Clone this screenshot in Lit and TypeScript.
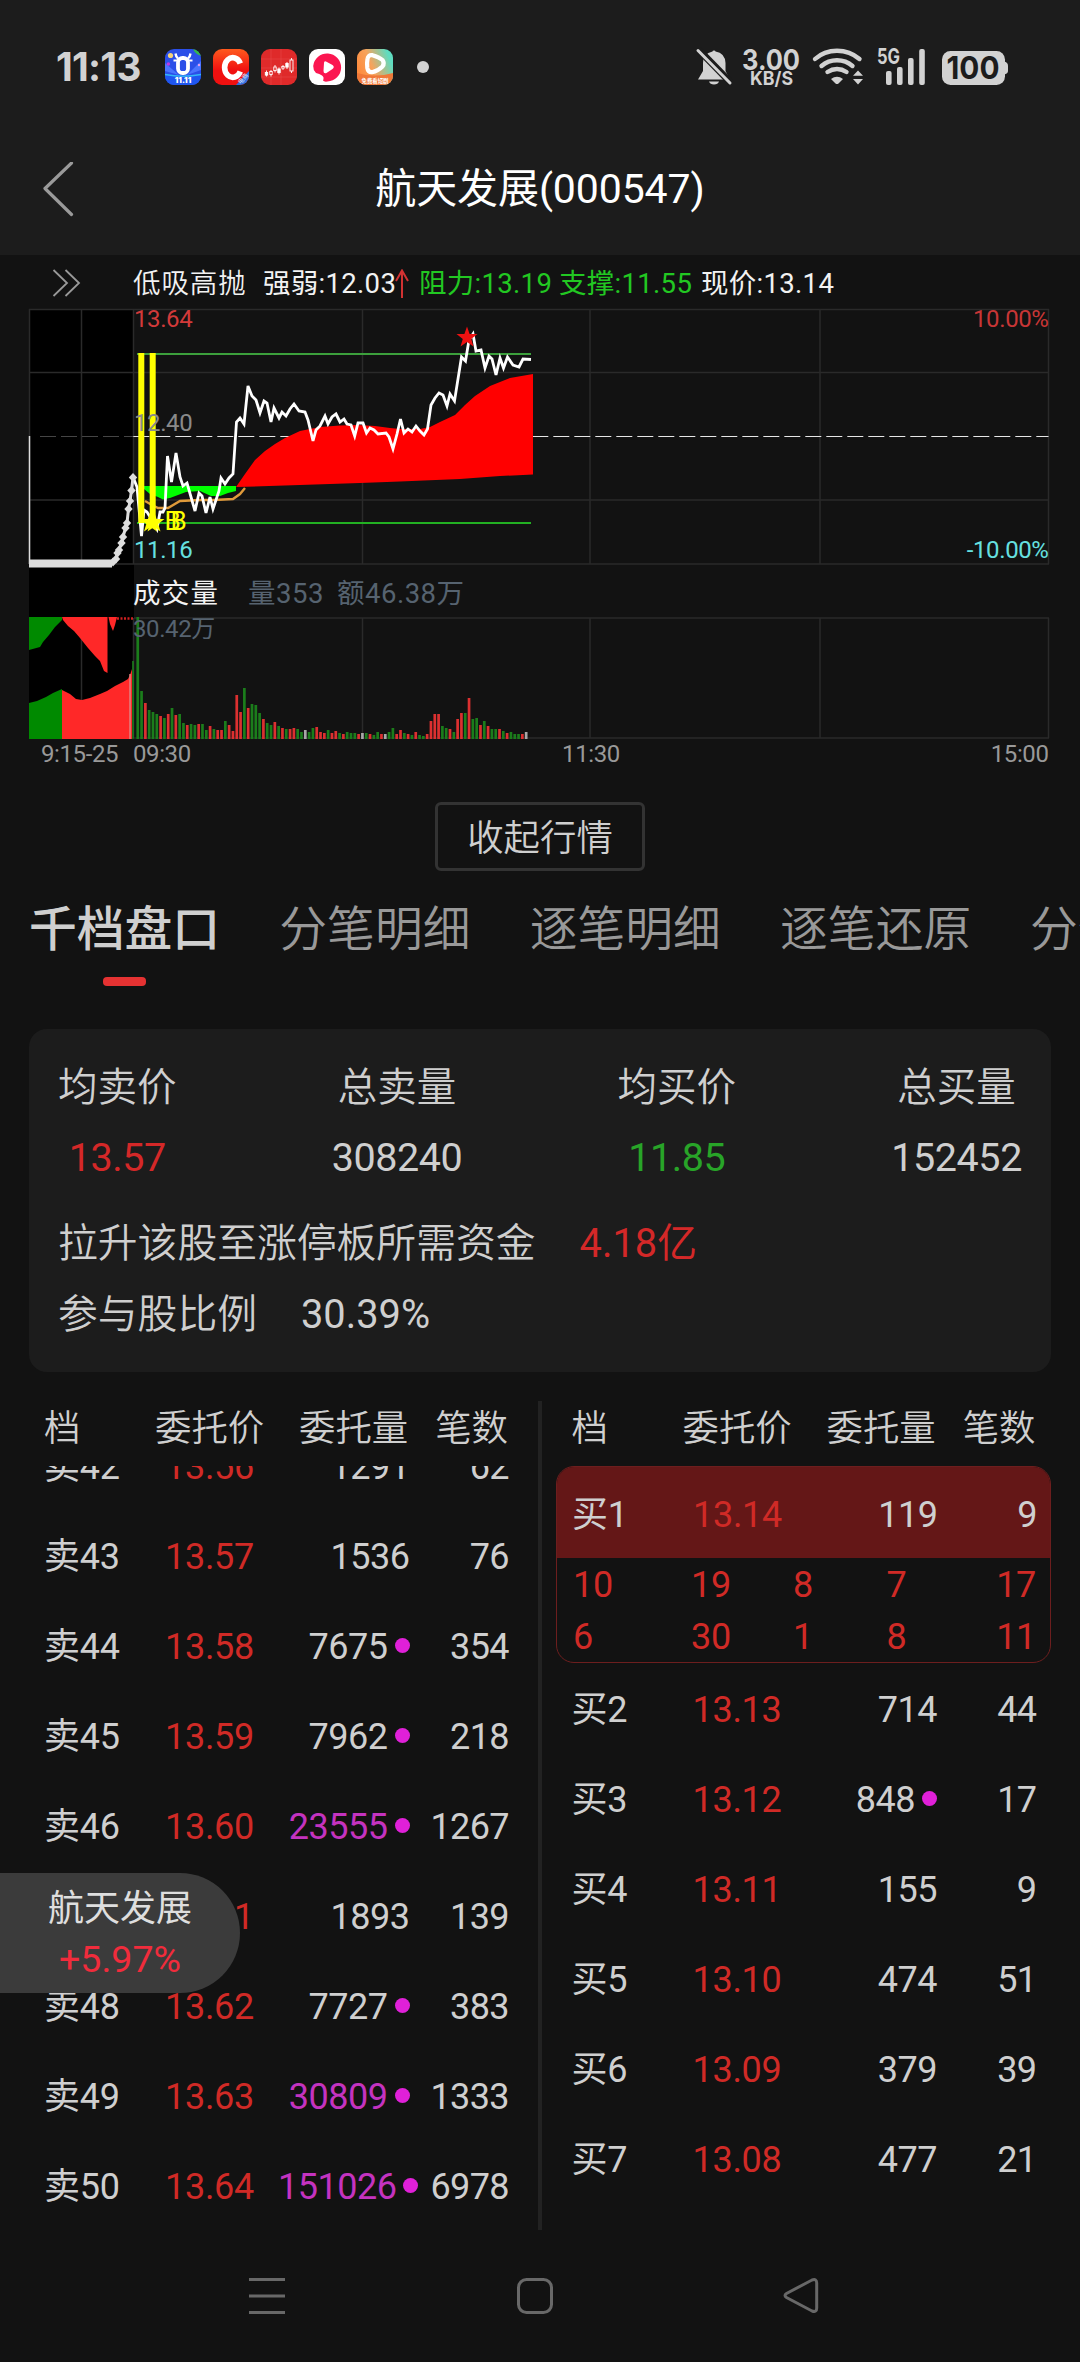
import { LitElement, html, css, svg, nothing } from "lit";
import { customElement, property } from "lit/decorators.js";
import { classMap } from "lit/directives/class-map.js";

const FONT = css`"Roboto", "Noto Sans CJK SC", "Liberation Sans", sans-serif`;

/* ---------- status bar ---------- */

@customElement("status-bar")
export class StatusBar extends LitElement {
  static styles = css`
    :host { display: block; }
    .bar { display: flex; align-items: center; height: 134px; padding: 0 72px 0 56px; color: #d2d2d2; font-family: "Inter", "Roboto", sans-serif; }
    .time { width: 109px; font: 700 39px/40px "Inter", sans-serif; letter-spacing: -0.8px; white-space: nowrap; }
    .apps { display: flex; gap: 12px; align-items: center; }
    .apps svg { display: block; }
    .dot { width: 12px; height: 12px; border-radius: 50%; background: #d2d2d2; margin-left: 24px; }
    .right { display: block; margin-left: auto; }
  `;
  render() {
    return html`<div class="bar">
      <span class="time">11:13</span>
      <div class="apps">
        <svg width="36" height="36" viewBox="0 0 36 36">
          <defs>
            <clipPath id="r"><rect width="36" height="36" rx="9"></rect></clipPath>
          </defs>
          <g clip-path="url(#r)">
            <rect width="36" height="36" fill="#2b4fe8"></rect>
            <path d="M0 14L14 26L0 22zM36 12L22 26L36 21z" fill="#4a74ff"></path>
            <path d="M0 25Q18 29 36 25V36H0z" fill="#1f56f0"></path>
            <path d="M0 25.5Q18 29 36 25.5" stroke="#35b6f5" stroke-width="1.6" fill="none"></path>
            <circle cx="5.5" cy="6.5" r="2.6" fill="#f3d27a"></circle>
            <circle cx="3.4" cy="15" r="1.8" fill="#c03ae0"></circle>
            <path d="M28 0H36V7Q30 5 28 0z" fill="#35b848"></path>
            <circle cx="34" cy="16" r="1.2" fill="#e4a0f0"></circle>
            <path d="M10.5 4.5Q11 8 13 9.500M25.500 4.500Q25 8 23 9.500" stroke="#fff" stroke-width="2.400" fill="none"></path>
            <path d="M8.500 11.500H27.500" stroke="#fff" stroke-width="2.200"></path>
            <rect x="13" y="9" width="10" height="15" rx="4.500" stroke="#fff" stroke-width="3.800" fill="#2b4fe8"></rect>
            <text x="18" y="34.300" font-size="8" font-weight="900" fill="#fff" text-anchor="middle" font-family="Inter">11.11</text>
          </g>
        </svg>
        <svg width="36" height="36" viewBox="0 0 36 36">
          <defs>
            <linearGradient id="c" x2="0" y2="1"><stop stop-color="#ff5a1e"></stop><stop offset=".6" stop-color="#f01010"></stop></linearGradient>
            <clipPath id="r2"><rect width="36" height="36" rx="9"></rect></clipPath>
          </defs>
          <g clip-path="url(#r2)">
            <rect width="36" height="36" fill="url(#c)"></rect>
            <path d="M27.300 14.500A8.200 9.800 0 1 0 27.300 22.500" fill="none" stroke="#fff" stroke-width="5.600"></path>
            <path d="M36 22V36H23z" fill="#2f6fe0"></path>
            <text x="0" y="0" transform="translate(27.500 35.500) rotate(-47)" font-size="6" fill="#dfe9ff" font-family="Noto Sans CJK SC">电商</text>
          </g>
        </svg>
        <svg width="36" height="36" viewBox="0 0 36 36">
          <rect width="36" height="36" rx="9" fill="#df2a2a"></rect>
          <path d="M0 10H36M0 19H36M0 28H36M10 0V36M20 0V36" stroke="#e84848" stroke-width=".6"></path>
          <g stroke="#fff" stroke-width=".9" fill="none">
            <path d="M5.500 21.500V27.500M10 21V27.500M14 16V23.500M18 18.500V25.500M22 16V21M26 13V20M30.500 9V24"></path>
            <rect x="4.300" y="23.500" width="2.400" height="2.600" fill="#fff"></rect>
            <rect x="8.800" y="22.500" width="2.400" height="3" fill="#df2a2a"></rect>
            <rect x="12.800" y="18" width="2.400" height="3.600" fill="#df2a2a"></rect>
            <rect x="16.800" y="20" width="2.400" height="3.600" fill="#fff"></rect>
            <rect x="20.800" y="17.500" width="2.400" height="1.600" fill="#df2a2a"></rect>
            <rect x="24.800" y="14.500" width="2.400" height="3.600" fill="#fff"></rect>
            <rect x="29" y="11" width="3" height="11" fill="#df2a2a"></rect>
          </g>
        </svg>
        <svg width="36" height="36" viewBox="0 0 36 36">
          <rect width="36" height="36" rx="9" fill="#fff"></rect>
          <path d="M14 31.500Q15.500 28 13 26.500Q10.500 24.500 7 24Q4 21 4.200 17A14 14 0 1 1 18.500 32.500Q15 33 14 31.500z" fill="#fb1650"></path>
          <path d="M15 14Q15 11.500 17.500 12.700L23.500 16Q26 18 23.500 20L17.500 24Q14.500 25 14.500 22z" fill="#fff"></path>
        </svg>
        <svg width="36" height="36" viewBox="0 0 36 36">
          <defs>
            <linearGradient id="g" x1="0" y1=".6" x2="1" y2=".2"><stop stop-color="#ff8a3c"></stop><stop offset=".4" stop-color="#f6a35c"></stop><stop offset=".9" stop-color="#5fdcc0"></stop></linearGradient>
            <clipPath id="r3"><rect width="36" height="36" rx="9"></rect></clipPath>
          </defs>
          <g clip-path="url(#r3)">
            <rect width="36" height="36" fill="url(#g)"></rect>
            <path d="M0 24Q18 29 36 24V36H0z" fill="#f07838"></path>
            <path d="M10.500 10Q11 5.500 15.500 6.200Q22 8 25.500 11Q28 14.500 25.500 17.500Q21 22 15 23.200Q11 23.500 10.300 19Q9.700 14 10.500 10z" fill="none" stroke="#fff" stroke-width="4.200"></path>
            <text x="18" y="34" font-size="5.400" font-weight="700" fill="#fff" text-anchor="middle" font-family="Noto Sans CJK SC">免费看短剧</text>
          </g>
        </svg>
      </div>
      <div class="dot"></div>
      <svg class="right" width="314" height="40" viewBox="694 47 314 40" fill="#d2d2d2">
        <path d="M712.500 51.500Q712.500 50.500 714 50.500Q715.500 50.500 715.500 51.500Q725 53 725.500 63V71L730 79.500H698L703 71V63Q703 53.500 712.500 51.500z"></path>
        <path d="M709 81.500H719Q718 84.500 714 84.500Q710 84.500 709 81.500z"></path>
        <path d="M696 47L733 85" stroke="#1c1c1c" stroke-width="7"></path>
        <path d="M698 50.500L730 83" stroke="#d2d2d2" stroke-width="3" stroke-linecap="round"></path>
        <g font-family="Inter" font-weight="700">
          <text x="742" y="69.500" font-size="28" textLength="58" lengthAdjust="spacingAndGlyphs">3.00</text>
          <text x="750" y="84.500" font-size="18.500" textLength="43" lengthAdjust="spacingAndGlyphs">KB/S</text>
          <text x="877" y="64" font-size="21.500" textLength="23" lengthAdjust="spacingAndGlyphs">5G</text>
        </g>
        <g fill="none" stroke="#d2d2d2" stroke-width="4.400" stroke-linecap="round">
          <path d="M815 59Q824 50.700 837 50.700Q850 50.700 859.500 59"></path>
          <path d="M821.500 66Q828 60.200 837 60.200Q846 60.200 852.500 66"></path>
          <path d="M827.500 72Q832 69 837 69Q842 69 846.500 72"></path>
        </g>
        <path d="M831 79Q837 74.500 843 79L838.500 83.500Q837 84.700 835.500 83.500z"></path>
        <path d="M858 70.500L863 75.800H853zM858 84.500L863 79H853z"></path>
        <rect x="886" y="71" width="5.600" height="14" rx="2"></rect>
        <rect x="897" y="67" width="5.600" height="18" rx="2"></rect>
        <rect x="908" y="58" width="5.600" height="27" rx="2"></rect>
        <rect x="919.200" y="49" width="5.600" height="36" rx="2"></rect>
        <rect x="942" y="51" width="63" height="34" rx="8.500"></rect>
        <path d="M1004 61.500Q1008 62 1008 66V71Q1008 73.500 1004 74.500z"></path>
        <text x="946.500" y="79.300" font-size="31.500" font-weight="700" font-family="Inter" fill="#1c1c1c" textLength="53" lengthAdjust="spacingAndGlyphs">100</text>
      </svg>
    </div>`;
  }
}

/* ---------- intraday chart ---------- */

const PRICE =
  "133,477 137,487 141.5,536 144,510 147,512 152,520 157,529 160,512 163,512 165,508 167.5,456 171.5,482 176,453 180,477 183,486 187,483 191,497 195,511 199,493 202,496 206,513 210,497 213,509 219,491 221,478 225,484 229,478 233,474 236.5,422 240,418 244,424 248,386 252,396 256,400 260,413 264,401 267,403 271,422 274,408 279,418 282,412 286,416 290,409 294,404 299,411 305,412 308,420 313,441 316,430 320,426 325,416 328,424 332,417 336,414 340,422 344,419 347,424 351,425 354.7,436 358,423 363,423 366.5,433 370,428 374,430 378,434 386,433 389,437 393,449 397,434 400.5,419 404,433 408,429 412,432 416,426 420,431 424,435 427.5,429 431,405 435,398 439,393 443,395 447,406 450,394 454.5,401 461.5,357 465.5,361 469,340 473,334 476,351 481,350 485,368 489,356 492,359 496,375 500,358 503.5,368 507.5,357 513,365 519,367 523,359 531,359.5";

const RISE =
  "236,487 245,474 255,460 265,451 275,444 285,438 300,431 310,429 320,427 340,425.5 357,425 375,426 390,428 400,429 420,429 430,427 440,422 455,415 465,405 475,396 490,386 510,378 533,374 533,474.5 500,476 460,479 400,481.5 360,483 300,485";

const FALL =
  "144,486 236,486 236,491 228,493 220,496 211,496 200,491 186,492 178,495 170,498 163,499.5 158,497 150,494 144,489";

const AUCTION: [number, number][] = [
  [133, 477.5], [131.5, 490.5], [130, 501], [128.5, 509], [127, 523], [125.5, 528],
  [123, 537], [121.5, 543], [119, 550], [117.5, 553], [116, 559], [113, 562],
];

/* One entry per minute: colour letter and bar height. */
const VOLUME = (
  "g122 g48 r36 g29 g27 g25 r23 g21 r25 g31 r24 g25 g16 r14 g15 g14 r15 g15 g9 r13 g10 r9 r9 g18 r14 r8 r44 r27 g51 r31 g35 g34 g26 r20 g16 g14 r17 g13 r11 g10 r10 r11 g10 g7 w9 g7 g11 r12 r7 r6 g9 r6 r8 g6 r5 g7 g6 g6 r5 w6 g6 r5 g4 g7 r5 w5 g7 g11 r5 r9 g6 r5 g4 r7 g4 g3 r5 r18 r25 r25 g13 g11 r10 g7 r20 r26 g26 r41 g20 g21 r14 g18 r13 g10 g10 r10 g8 r6 g7 g5 g5 r5 w7"
).split(" ").map((s) => ({ tone: s[0], h: Number(s.slice(1)) }));

const TONE: Record<string, string> = { g: "#1b7d1b", r: "#dc3030", w: "#a8a8a8" };

function star(cx: number, cy: number, r: number) {
  return Array.from({ length: 10 }, (_, i) => {
    const a = (Math.PI / 5) * i - Math.PI / 2;
    const k = i % 2 ? r * 0.4 : r;
    return `${(cx + k * Math.cos(a)).toFixed(1)},${(cy + k * Math.sin(a)).toFixed(1)}`;
  }).join(" ");
}

@customElement("intraday-chart")
export class IntradayChart extends LitElement {
  static styles = css`
    :host { display: block; font-family: ${FONT}; }
    .legend { display: grid; grid-template-columns: 133px 130px 132px 24px 140px 142px auto; align-items: center; padding-top: 3px; height: 50px; font-size: 27.500px; line-height: 52px; color: #f2f2f2; white-space: nowrap; }
    .legend span { letter-spacing: 0.300px; }
    .legend .cjk { letter-spacing: 0.900px; font-weight: 350; }
    .legend .lv { color: #22c822; }
    .more { justify-self: start; margin-left: 52px; display: block; }
    .plot { display: block; }
    .t { font-size: 24px; letter-spacing: -0.400px; }
    .vol { font-size: 27.500px; letter-spacing: 0.500px; }
    .vol .name { letter-spacing: 1.200px; }
  `;
  render() {
    const grid = "#2a2a2a";
    return html`
      <div class="legend">
        <svg class="more" width="30" height="30" viewBox="0 1 30 30" fill="none" stroke="#999" stroke-width="1.800">
          <path d="M1.500 2L15 15L1.500 28M13.500 2L27 15L13.500 28"></path>
        </svg>
        <span class="cjk">低吸高抛</span>
        <span>强弱:12.03</span>
        <svg width="14" height="30" viewBox="0 0 14 30" fill="none" stroke="#d23232" stroke-width="2">
          <path d="M7 29V1.500M1 12L7 1.500L13 12"></path>
        </svg>
        <span class="lv">阻力:13.19</span>
        <span class="lv">支撑:11.55</span>
        <span>现价:13.14</span>
      </div>
      <svg class="plot" width="1080" height="462" viewBox="0 308 1080 462">
        <rect x="29" y="309" width="105" height="430" fill="#000"></rect>
        <g stroke=${grid} stroke-width="1.500" fill="none">
          <path d="M29 309.500H1049M29 372.500H1049M29 500H1049M29 564H1049M134 618H1049M134 738H1049" stroke-width="1.600"></path>
          <path d="M29.500 309V564M81.500 309V564M133.500 309V564M362.500 309V564M590 309V564M820 309V564M1048.500 309V564"></path>
          <path d="M81.500 618V738M133.500 618V738M362.500 618V738M590 618V738M820 618V738M1048.500 618V738"></path>
        </g>
        <path d="M40 436.500H133" stroke="#454545" stroke-width="1" stroke-dasharray="16 5"></path>
        <path d="M133.300 436.500H1048.500" stroke="#e6e6e6" stroke-width="1" stroke-dasharray="16 5"></path>

        <path d="M137 354H531" stroke="#3ca03c" stroke-width="2"></path>
        <path d="M137 523H531" stroke="#22b022" stroke-width="2"></path>
        <polygon points=${FALL} fill="#00ff00"></polygon>
        <polygon points=${RISE} fill="#ff0000"></polygon>
        <polyline points="145,501 152,505 158,508 168,508 180,501 200,500 214,500 233,499 240,494 245,488" fill="none" stroke="#e09a3a" stroke-width="2.400"></polyline>
        <polyline points=${PRICE} fill="none" stroke="#fff" stroke-width="2.800"></polyline>
        <rect x="138.300" y="353" width="6" height="170" fill="#ffff00"></rect>
        <rect x="149.700" y="353" width="6" height="170" fill="#ffff00"></rect>
        <polygon points=${star(150.5, 522.5, 11)} fill="#ffff00"></polygon>
        <polygon points=${star(154, 522.5, 11)} fill="#ffff00"></polygon>
        <polygon points=${star(467, 337.5, 11)} fill="#ee1111"></polygon>
        <g fill="#ffff00" font-size="26"><text x="164.500" y="529.500">B</text><text x="170.500" y="529.500">B</text></g>

        <path d="M29.500 436V564" stroke="#ddd" stroke-width="1.500"></path>
        <path d="M29 563.500H112" stroke="#ddd" stroke-width="8"></path>
        <polyline points=${AUCTION.map((p) => p.join(",")).join(" ")} fill="none" stroke="#ddd" stroke-width="3"></polyline>
        ${AUCTION.map(([x, y]) => svg`<polygon points="${x - 4.2},${y} ${x},${y - 4.6} ${x + 4.2},${y} ${x},${y + 4.6}" fill="#ddd"></polygon>`)}

        <g class="t">
          <text x="134" y="327" fill="#d23a3a">13.64</text>
          <text x="134" y="431" fill="#8a8a8a">12.40</text>
          <text x="134" y="558" fill="#66e0e0">11.16</text>
          <text x="1048.500" y="327" fill="#c83636" text-anchor="end">10.00%</text>
          <text x="1048.500" y="558" fill="#66e0e0" text-anchor="end">-10.00%</text>
          <g fill="#999">
            <text x="41" y="762">9:15-25</text>
            <text x="133" y="762">09:30</text>
            <text x="591" y="762" text-anchor="middle">11:30</text>
            <text x="1048.500" y="762" text-anchor="end">15:00</text>
          </g>
        </g>
        <g class="vol">
          <text class="name" x="133" y="602.500" fill="#f2f2f2">成交量</text>
          <text x="248" y="602.500" fill="#566370">量353</text>
          <text x="337" y="602.500" fill="#566370">额46.38万</text>
        </g>

        <polygon points="29,617 62,617 62,620 55,627 49,635 43,642 40,647 29,650" fill="#008a00"></polygon>
        <polygon points="62,617 107.500,617 107.500,673 104,671 100,661 95,656 88,648 80,638 74,631 68,626 63,620" fill="#ff2828"></polygon>
        <polygon points="108.500,617 117,617 115,625 113,631 110,624" fill="#ff2828"></polygon>
        <path d="M117 618.500H133" stroke="#d02020" stroke-width="2.500" stroke-dasharray="2 1.500"></path>
        <polygon points="29,703 37,701 46,697 53,693 62,689 62,739 29,739" fill="#008a00"></polygon>
        <polygon points="62,690 70,694 76,699 82,700 90,698 100,694 107,691 115,686 123,682 128,679 130,675 132,669 132,739 62,739" fill="#ff2828"></polygon>
        <path d="M130 674V739" stroke="#e08080" stroke-width="1.500"></path>
        <path d="M133 661V739" stroke="#1b7d1b" stroke-width="1.600"></path>
        ${VOLUME.map(({ tone, h }, i) => svg`<rect x=${136.4 + i * 3.808} y=${739 - h} width="2.700" height=${h} fill=${TONE[tone]}></rect>`)}
        <text class="t" x="133" y="636.500" fill="#566370">30.42万</text>
      </svg>
    `;
  }
}

/* ---------- order book ---------- */

interface Level { name: string; price: string; vol: string; count: string; dot?: boolean; big?: boolean; }

const SELLS: Level[] = [
  { name: "卖42", price: "13.56", vol: "1291", count: "62" },
  { name: "卖43", price: "13.57", vol: "1536", count: "76" },
  { name: "卖44", price: "13.58", vol: "7675", count: "354", dot: true },
  { name: "卖45", price: "13.59", vol: "7962", count: "218", dot: true },
  { name: "卖46", price: "13.60", vol: "23555", count: "1267", dot: true, big: true },
  { name: "卖47", price: "13.61", vol: "1893", count: "139" },
  { name: "卖48", price: "13.62", vol: "7727", count: "383", dot: true },
  { name: "卖49", price: "13.63", vol: "30809", count: "1333", dot: true, big: true },
  { name: "卖50", price: "13.64", vol: "151026", count: "6978", dot: true, big: true },
];

const BUYS: Level[] = [
  { name: "买2", price: "13.13", vol: "714", count: "44" },
  { name: "买3", price: "13.12", vol: "848", count: "17", dot: true },
  { name: "买4", price: "13.11", vol: "155", count: "9" },
  { name: "买5", price: "13.10", vol: "474", count: "51" },
  { name: "买6", price: "13.09", vol: "379", count: "39" },
  { name: "买7", price: "13.08", vol: "477", count: "21" },
];

const QUEUE = [["10", "19", "8", "7", "17"], ["6", "30", "1", "8", "11"]];

@customElement("level-row")
export class LevelRow extends LitElement {
  @property({ attribute: false }) level!: Level;
  static styles = css`
    :host { display: block; }
    .row { display: grid; grid-template-columns: 111px 108px 147px 99px; line-height: 90px; height: 90px; white-space: nowrap; letter-spacing: -0.300px; }
    .price { text-align: center; color: #d02a26; margin-left: 1px; }
    .vol { display: flex; align-items: center; padding-left: 15px; margin-right: 0.500px; }
    .num { margin-left: auto; letter-spacing: -0.500px; }
    .big { color: #c433c0; }
    .count { text-align: right; letter-spacing: -0.600px; }
    .dot { flex: none; width: 15px; height: 15px; border-radius: 50%; background: #e020d8; margin: -3px 0 0 7px; }
  `;
  render() {
    const l = this.level;
    return html`<div class="row">
      <span>${l.name}</span>
      <span class="price">${l.price}</span>
      <span class="vol"><span class=${classMap({ num: true, big: !!l.big })}>${l.vol}</span>${l.dot ? html`<span class="dot"></span>` : nothing}</span>
      <span class="count">${l.count}</span>
    </div>`;
  }
}

@customElement("order-book")
export class OrderBook extends LitElement {
  static styles = css`
    :host { display: block; font-family: ${FONT}; font-size: 36px; color: #cfcfcf; }
    .book { display: grid; grid-template-columns: 538px 4px 538px; height: 829px; overflow: hidden; }
    .rule { background: #222; }
    .side { display: flex; flex-direction: column; min-width: 0; min-height: 0; }
    .head { display: grid; grid-template-columns: 111px 144px 108px 101px; line-height: 56px; height: 65px; font-size: 36.400px; font-weight: 350; white-space: nowrap; flex: none; }
    .sell .head, .sell .rows { padding-left: 44px; }
    .buy .head { padding-left: 29.500px; }
    .head span:nth-child(n + 3) { text-align: right; }
    .clip { overflow: hidden; flex: 1; }
    .sell .rows { margin-top: -44px; }
    .buy .rows { padding-left: 29.500px; margin-top: 2px; }
    .pick { margin-left: 14px; width: 493px; height: 195px; border: 1px solid #6d1e1e; border-radius: 18px; overflow: hidden; }
    .pick .top { background: #641717; padding: 3px 0 0 15px; height: 88px; }
    .queue { display: grid; grid-template-columns: 118px 65px 94px 93px 93px; padding: 1px 0 0 16px; line-height: 52px; color: #d02a26; letter-spacing: -0.300px; }
    .queue span:nth-child(5n + 3), .queue span:nth-child(5n + 4) { text-align: center; }
    .queue span:nth-child(5n) { text-align: right; }
  `;
  private head() {
    return html`<div class="head"><span>档</span><span>委托价</span><span>委托量</span><span>笔数</span></div>`;
  }
  render() {
    return html`<div class="book">
      <div class="side sell">
        ${this.head()}
        <div class="clip"><div class="rows">${SELLS.map((l) => html`<level-row .level=${l}></level-row>`)}</div></div>
      </div>
      <div class="rule"></div>
      <div class="side buy">
        ${this.head()}
        <div class="pick">
          <div class="top"><level-row .level=${{ name: "买1", price: "13.14", vol: "119", count: "9" }}></level-row></div>
          <div class="queue">${QUEUE.flat().map((q) => html`<span>${q}</span>`)}</div>
        </div>
        <div class="rows">${BUYS.map((l) => html`<level-row .level=${l}></level-row>`)}</div>
      </div>
    </div>`;
  }
}

/* ---------- page ---------- */

const TABS = ["千档盘口", "分笔明细", "逐笔明细", "逐笔还原", "分价表"];

@customElement("app-root")
export class AppRoot extends LitElement {
  static styles = css`
    :host { display: block; position: relative; width: 1080px; height: 2362px; overflow: hidden; background: #121212; font-family: ${FONT}; color: #cfcfcf; }
    .header { background: #1c1c1c; height: 255px; }
    .title { display: grid; grid-template-columns: 100px 1fr 100px; align-items: center; height: 109px; }
    .title svg { margin-left: 41px; display: block; }
    .title h1 { margin: 0; font-size: 41px; font-weight: 400; color: #fff; text-align: center; line-height: 111px; letter-spacing: -0.100px; }
    .toggle { display: flex; justify-content: center; margin-top: 32px; }
    .toggle span { box-sizing: border-box; width: 210px; height: 69px; border: 3px solid #333; border-radius: 6px; text-align: center; font-size: 36.400px; font-weight: 350; line-height: 67px; }
    .tabs { display: flex; gap: 58.400px; margin: 22px 0 0 28.500px; height: 93px; font-size: 47.800px; font-weight: 350; line-height: 75px; white-space: nowrap; color: #999; }
    .tab { flex: none; min-width: 192px; display: flex; flex-direction: column; align-items: center; }
    .tab:last-child { align-items: flex-start; }
    .tab.on { color: #cfcfcf; font-weight: 500; }
    .tab.on::after { content: ""; width: 43px; height: 9px; margin-top: 9px; border-radius: 4px; background: #e53232; }
    .card { box-sizing: border-box; height: 343px; margin: 43px 29px 29px; padding: 23px 29px 0; border-radius: 18px; background: #1c1c1c; font-size: 39.800px; line-height: 71px; }
    .sum { display: flex; justify-content: space-between; margin-bottom: 15px; font-size: 39.500px; }
    .sum div { display: flex; flex-direction: column; align-items: center; }
    .sum div span:first-child { font-weight: 350; }
    .sum div span:last-child { letter-spacing: -0.400px; margin-top: -1px; }
    .fact { display: flex; gap: 44px; }
    .fact span:first-child { font-weight: 350; }
    .up { color: #d42828; }
    .down { color: #28a428; }
    .pill { position: absolute; left: 0; top: 1873px; width: 240px; height: 120px; box-sizing: border-box; padding-top: 11px; border-radius: 0 60px 60px 0; background: #3b3b3b; text-align: center; font-size: 36px; line-height: 50px; color: #dedede; }
    .pill b { display: block; font-weight: 400; font-size: 37.500px; color: #f02c3c; }
    .nav { display: flex; align-items: center; height: 132px; padding-left: 247px; gap: 228px; }
    .nav svg { display: block; flex: none; }
  `;
  render() {
    return html`
      <div class="header">
        <status-bar></status-bar>
        <div class="title">
          <svg width="36" height="56" viewBox="41 160 36 56" fill="none" stroke="#9a9a9a" stroke-width="3.200" stroke-linecap="round" stroke-linejoin="round"><path d="M71.500 161L45 186.500L71.500 212.500"></path></svg>
          <h1>航天发展(000547)</h1>
        </div>
      </div>
      <intraday-chart></intraday-chart>
      <div class="toggle"><span>收起行情</span></div>
      <div class="tabs">${TABS.map((t, i) => html`<div class=${classMap({ tab: true, on: i === 0 })}>${t}</div>`)}</div>
      <div class="card">
        <div class="sum">
          <div><span>均卖价</span><span class="up">13.57</span></div>
          <div><span>总卖量</span><span>308240</span></div>
          <div><span>均买价</span><span class="down">11.85</span></div>
          <div><span>总买量</span><span>152452</span></div>
        </div>
        <div class="fact"><span>拉升该股至涨停板所需资金</span><span class="up">4.18亿</span></div>
        <div class="fact"><span>参与股比例</span><span>30.39%</span></div>
      </div>
      <order-book></order-book>
      <div class="nav">
        <svg width="40" height="40" viewBox="0 0 40 40" stroke="#686868" stroke-width="3"><path d="M2 3.500H38M2 20H38M2 36.500H38"></path></svg>
        <svg width="40" height="40" viewBox="0 0 40 40" stroke="#686868" stroke-width="3" fill="none"><rect x="3.500" y="3.500" width="33" height="33" rx="8"></rect></svg>
        <svg width="40" height="40" viewBox="0 0 40 40" stroke="#686868" stroke-width="3" fill="none"><path d="M29 4Q33.700 2.300 33.700 7V32Q33.700 36.700 29 35L3.500 21.500Q0.500 19.500 3.500 17.500z"></path></svg>
      </div>
      <div class="pill">航天发展<b>+5.97%</b></div>
    `;
  }
}
